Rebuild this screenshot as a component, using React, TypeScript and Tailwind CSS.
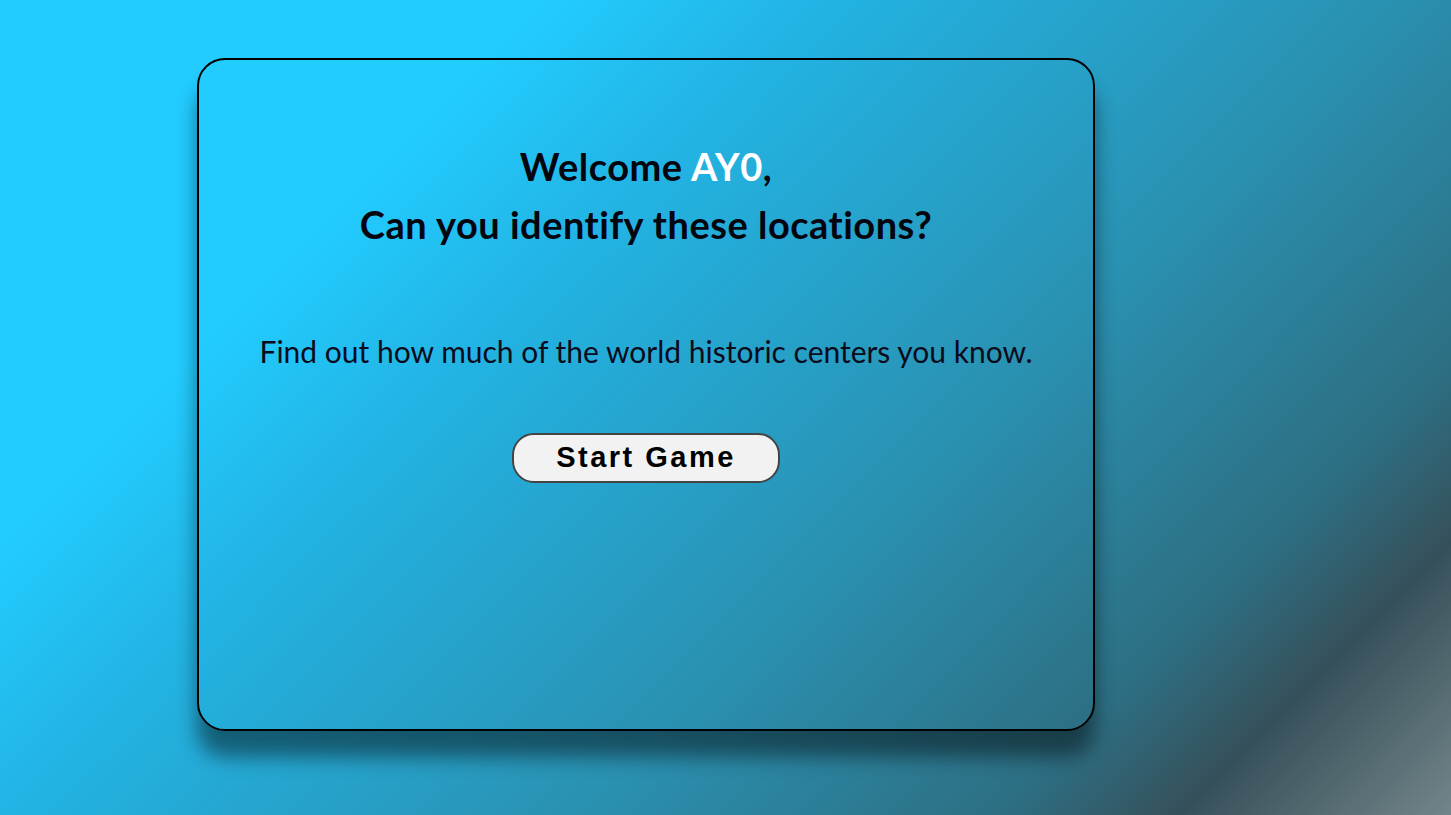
import React from 'react';

export default function App() {
    const player = 'AY0';

    return (
        <section className="w-full min-h-screen h-[815px] overflow-hidden bg-[linear-gradient(135deg,#22ccff_0%,#22ccff_24%,#22b4e4_36%,#2a90b0_62%,#2d6f83_80%,#36505a_88%,#738589_100%)] font-['Lato','Noto_Sans',sans-serif]">
            {/* Game intro card */}
            <div className="ml-[197px] pt-[58px]">
                <div className="w-[898px] h-[673px] border-2 border-black rounded-[28px] shadow-[0_26px_20px_rgba(0,0,0,0.45)] flex flex-col items-center pt-[77px]">
                    <h1 className="text-[#05050f] text-[38px] font-bold leading-[58px] tracking-[0.5px] text-center">
                        Welcome <span className="text-white">{player}</span>,
                        <br />
                        Can you identify these locations?
                    </h1>

                    <p className="mt-[78px] text-[#0b0b1c] text-[30px] leading-[40px] text-center">
                        Find out how much of the world historic centers you know.
                    </p>

                    <button className="mt-[62px] w-[268px] h-[50px] rounded-[22px] border-2 border-[#444] bg-[#f2f2f2] text-black text-[29px] font-bold tracking-[2.5px] font-['Liberation_Sans',Arial,sans-serif] flex items-center justify-center">
                        Start Game
                    </button>
                </div>
            </div>
        </section>
    );
}
